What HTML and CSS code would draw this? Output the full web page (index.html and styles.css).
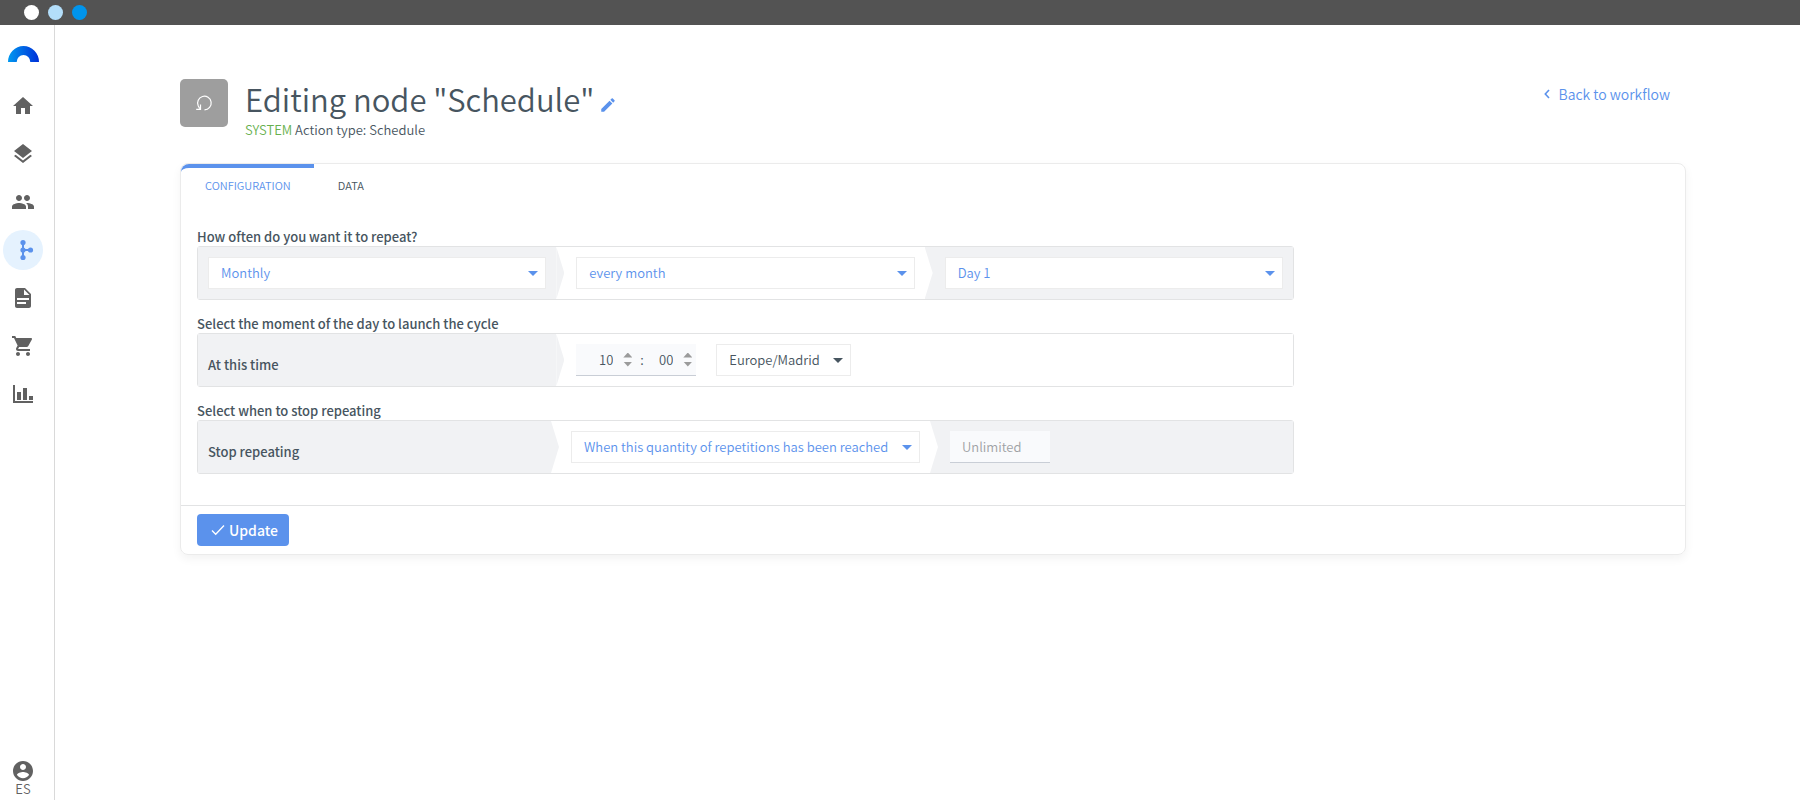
FILE: index.html
```html
<!DOCTYPE html>
<html lang="en">
<head>
<meta charset="utf-8">
<title>Editing node "Schedule"</title>
<link rel="stylesheet" href="styles.css">
</head>
<body>
<div class="topbar">
  <span class="dot dot-white"></span>
  <span class="dot dot-light"></span>
  <span class="dot dot-blue"></span>
</div>
<div class="shell">
  <nav class="sidebar" aria-label="Main">
    <a class="logo" href="#" aria-label="Start">
      <svg width="31" height="16" viewBox="0 0 32 16" preserveAspectRatio="none">
        <defs><linearGradient id="arc" x1="0" x2="1" y1="0" y2="0"><stop offset="0" stop-color="#0099f0"/><stop offset="1" stop-color="#002fd8"/></linearGradient></defs>
        <path d="M0 16a16 16 0 0 1 32 0h-9a7 7 0 0 0-14 0z" fill="url(#arc)"/>
      </svg>
    </a>
    <a class="nav-item" href="#" aria-label="Home"><svg class="icon" viewBox="0 0 24 24"><path d="M10 20v-6h4v6h5v-8h3L12 3 2 12h3v8z"/></svg></a>
    <a class="nav-item" href="#" aria-label="Layers"><svg class="icon" viewBox="0 0 24 24"><path d="M11.99 18.54l-7.37-5.73L3 14.07l9 7 9-7-1.63-1.27-7.38 5.74zM12 16l7.36-5.73L21 9l-9-7-9 7 1.63 1.27L12 16z"/></svg></a>
    <a class="nav-item" href="#" aria-label="People"><svg class="icon" viewBox="0 0 24 24"><path d="M16 11c1.66 0 2.99-1.34 2.99-3S17.66 5 16 5c-1.66 0-3 1.34-3 3s1.34 3 3 3zm-8 0c1.66 0 2.99-1.34 2.99-3S9.66 5 8 5C6.34 5 5 6.34 5 8s1.34 3 3 3zm0 2c-2.33 0-7 1.17-7 3.5V19h14v-2.500c0-2.330-4.670-3.500-7-3.500zm8 0c-.29 0-.62.02-.97.05 1.160.84 1.970 1.970 1.970 3.450V19h6v-2.500c0-2.330-4.670-3.500-7-3.500z"/></svg></a>
    <a class="nav-item active" href="#" aria-label="Workflows" aria-current="page"><svg class="icon" viewBox="0 0 24 24"><path d="M12 4.500v15M12 12h7.500" stroke="currentColor" stroke-width="2"/><circle cx="12" cy="4.500" r="2.600"/><circle cx="12" cy="12" r="2.600"/><circle cx="12" cy="19.500" r="2.600"/><circle cx="19.500" cy="12" r="2.600"/></svg></a>
    <a class="nav-item" href="#" aria-label="Documents"><svg class="icon" viewBox="0 0 24 24"><path d="M14 2H6c-1.100 0-1.990.9-1.990 2L4 20c0 1.100.89 2 1.990 2H18c1.100 0 2-.9 2-2V8l-6-6zm1 16H6v-2h9v2zm3-4H6v-2h12v2zm-5-5V3.500L18.500 9H13z"/></svg></a>
    <a class="nav-item" href="#" aria-label="Shop"><svg class="icon" viewBox="0 0 24 24"><path d="M7 18c-1.100 0-1.990.9-1.990 2S5.900 22 7 22s2-.9 2-2-.9-2-2-2zM1 2v2h2l3.600 7.590-1.350 2.450c-.16.28-.25.61-.25.96 0 1.100.9 2 2 2h12v-2H7.420c-.14 0-.25-.11-.25-.25l.03-.12.9-1.630h7.450c.75 0 1.410-.41 1.750-1.030l3.580-6.490c.08-.14.12-.31.12-.48 0-.55-.45-1-1-1H5.210l-.94-2H1zm16 16c-1.100 0-1.990.9-1.990 2s.89 2 1.990 2 2-.9 2-2-.9-2-2-2z"/></svg></a>
    <a class="nav-item" href="#" aria-label="Reports"><svg class="icon" viewBox="0 0 24 24"><path d="M2 3h2v16h18v2H2zM6 10h4v8H6zM12 6h4v12h-4zM18 14h4v4h-4z"/></svg></a>
    <a class="account" href="#">
      <svg class="icon" viewBox="0 0 24 24"><path d="M12 2C6.480 2 2 6.480 2 12s4.480 10 10 10 10-4.480 10-10S17.520 2 12 2zm0 3c1.660 0 3 1.340 3 3s-1.340 3-3 3-3-1.340-3-3 1.340-3 3-3zm0 14.200c-2.500 0-4.710-1.280-6-3.220.03-1.990 4-3.080 6-3.080 1.990 0 5.970 1.090 6 3.080-1.290 1.940-3.500 3.220-6 3.220z"/></svg>
      <span class="locale">ES</span>
    </a>
  </nav>

  <main class="content">
    <header class="page-head">
      <span class="node-badge">
        <svg class="line-icon" width="18" height="18" viewBox="0 0 18 18" stroke-width="1.200"><path d="M9.500 15.800A6.800 6.800 0 1 0 3.200 11.800L4.600 14.500M1.200 15.300H5.500V10.500"/></svg>
      </span>
      <div class="titles">
        <h1 class="title">Editing node "Schedule"
          <button class="edit" type="button" aria-label="Rename"><svg width="18" height="18" viewBox="0 0 24 24"><path d="M3 17.250V21h3.750L17.810 9.940l-3.750-3.750L3 17.250zM20.710 7.040c.39-.39.39-1.020 0-1.410l-2.340-2.340c-.39-.39-1.020-.39-1.410 0l-1.830 1.830 3.750 3.750 1.830-1.830z"/></svg></button>
        </h1>
        <p class="subtitle"><span class="system">SYSTEM</span> Action type: Schedule</p>
      </div>
      <a class="back" href="#"><svg class="line-icon" width="6" height="10" viewBox="0 0 6 10" stroke-width="1.600"><path d="M5 1L1.300 5 5 9"/></svg>Back to workflow</a>
    </header>

    <form class="card">
      <div class="tabs" role="tablist">
        <button class="tab selected" type="button" role="tab" aria-selected="true">CONFIGURATION</button>
        <button class="tab" type="button" role="tab" aria-selected="false">DATA</button>
      </div>

      <div class="fields">
        <section class="field">
          <h2 class="field-title">How often do you want it to repeat?</h2>
          <div class="steps">
            <div class="step gray"><span class="picker"><select aria-label="Frequency"><option>Monthly</option></select></span></div>
            <div class="step"><span class="picker"><select aria-label="Interval"><option>every month</option></select></span></div>
            <div class="step gray"><span class="picker"><select aria-label="Day"><option>Day 1</option></select></span></div>
          </div>
        </section>

        <section class="field">
          <h2 class="field-title">Select the moment of the day to launch the cycle</h2>
          <div class="steps">
            <div class="step gray"><span class="step-label">At this time</span></div>
            <div class="step double">
              <div class="time">
                <input class="time-input" type="text" value="10" aria-label="Hour">
                <span class="spin"><button class="up" type="button" aria-label="Hour up"></button><button class="down" type="button" aria-label="Hour down"></button></span>
                <span class="colon">:</span>
                <input class="time-input" type="text" value="00" aria-label="Minute">
                <span class="spin"><button class="up" type="button" aria-label="Minute up"></button><button class="down" type="button" aria-label="Minute down"></button></span>
              </div>
              <span class="picker dark"><select aria-label="Time zone"><option>Europe/Madrid</option></select></span>
            </div>
          </div>
        </section>

        <section class="field">
          <h2 class="field-title">Select when to stop repeating</h2>
          <div class="steps">
            <div class="step gray"><label class="step-label" for="stop">Stop repeating</label></div>
            <div class="step fit"><span class="picker"><select id="stop"><option>When this quantity of repetitions has been reached</option></select></span></div>
            <div class="step gray"><input class="limit" type="text" placeholder="Unlimited" aria-label="Repetitions"></div>
          </div>
        </section>
      </div>

      <footer class="card-foot">
        <button class="update" type="submit"><svg class="line-icon" width="14" height="12" viewBox="0 0 14 12" stroke-width="1.300"><path d="M1 6.500L4.700 10.300 13 1.500"/></svg>Update</button>
      </footer>
    </form>
  </main>
</div>
</body>
</html>
```

FILE: styles.css
```css
* { box-sizing: border-box; }

body {
  margin: 0;
  background: #fff;
  color: #475560;
  font: 350 13px/20px "Noto Sans CJK JP", "Noto Sans", sans-serif;
}

button, input, select { font: inherit; color: inherit; }
button { padding: 0; border: 0; background: none; cursor: pointer; }
a { color: inherit; text-decoration: none; }
svg { display: block; fill: currentColor; }
.line-icon { fill: none; stroke: currentColor; }
h1, h2, p { margin: 0; font-weight: inherit; }

.topbar {
  display: flex;
  align-items: center;
  gap: 9px;
  height: 25px;
  padding-left: 24px;
  background: #535353;
}
.dot { width: 15px; height: 15px; border-radius: 50%; }
.dot-white { background: #fff; }
.dot-light { background: #b3defa; }
.dot-blue { background: #0094ec; }

.shell { display: flex; min-height: calc(100vh - 25px); }

.sidebar {
  display: flex;
  flex: none;
  flex-direction: column;
  align-items: center;
  width: 55px;
  padding: 21px 8px 5px 0;
  border-right: 1px solid #d9d9d9;
  color: #616161;
}
.logo { margin-bottom: 24px; }
.nav-item {
  display: flex;
  align-items: center;
  justify-content: center;
  width: 40px;
  height: 40px;
  margin-bottom: 8px;
  border-radius: 50%;
}
.nav-item.active { background: #e5f2fe; color: #5b92ec; }
.icon { width: 24px; height: 24px; }
.account { display: flex; flex-direction: column; align-items: center; margin-top: auto; }
.locale { line-height: 12px; }

.content { flex: 1; min-width: 0; padding: 54px 114px 40px 125px; }

.page-head { display: flex; align-items: flex-start; margin-bottom: 23px; }
.node-badge {
  display: flex;
  align-items: center;
  justify-content: center;
  width: 48px;
  height: 48px;
  border-radius: 5px;
  background: #9e9e9e;
  color: #fff;
}
.titles { margin-left: 17px; }
.title {
  display: flex;
  align-items: flex-end;
  gap: 5px;
  margin-bottom: 1px;
  font-size: 31px;
  line-height: 40px;
}
.edit { padding-bottom: 5px; color: #5b92ec; }
.system { color: #67b04e; }
.back {
  display: flex;
  align-items: center;
  gap: 9px;
  margin: 5px 16px 0 auto;
  color: #5b92ec;
  font-size: 14px;
}

.card {
  border: 1px solid #ebebeb;
  border-radius: 8px;
  box-shadow: 0 4px 10px rgba(0, 0, 0, 0.05);
}
.tabs { display: flex; }
.tab {
  padding: 9px 23px 9px 24px;
  border-top: 4px solid transparent;
  font-size: 11px;
  line-height: 16px;
}
.tab.selected {
  border-top-color: #5b92ec;
  border-radius: 8px 0 4px 0;
  color: #5b92ec;
}

.fields {
  display: flex;
  flex-direction: column;
  gap: 16px;
  width: 75%;
  padding: 27px 15px 31px 16px;
}
.field-title { margin-bottom: 1px; font-size: 13px; font-weight: 500; line-height: 16px; }
.steps {
  display: flex;
  border: 1px solid #e2e3e4;
  border-radius: 3px;
}
.step {
  position: relative;
  display: flex;
  flex: 1 1 0;
  gap: 20px;
  min-width: 0;
  padding: 10px;
  background: #fff;
}
.step.gray { background: #f1f2f4; }
.step + .step { padding-left: 20px; }
.step.double { flex: 2 1 60px; }
.step.fit { flex: none; }
.step:not(:last-child)::after {
  content: "";
  position: absolute;
  z-index: 1;
  top: 0;
  bottom: 0;
  left: 100%;
  width: 8px;
  background: inherit;
  clip-path: polygon(0 0, 100% 50%, 0 100%);
}
.step-label {
  height: 32px;
  padding-top: 11px;
  font-weight: 500;
}

.picker { position: relative; flex: 1; color: #5b92ec; }
.picker select {
  display: block;
  width: 100%;
  height: 32px;
  padding: 0 30px 0 12px;
  border: 1px solid #ececec;
  border-radius: 0;
  appearance: none;
  background: #fff;
}
.picker::after {
  content: "";
  position: absolute;
  top: 14px;
  right: 8px;
  border: 5px solid transparent;
  border-top-color: currentColor;
  border-bottom: 0;
  pointer-events: none;
}
.picker.dark { flex: none; color: #475560; }

.time {
  display: flex;
  align-items: center;
  height: 32px;
  padding-right: 4px;
  border-bottom: 1px solid #c9ced6;
  background: #f9fafc;
}
.time-input {
  width: 37px;
  height: 30px;
  padding: 0;
  border: 0;
  background: transparent;
  text-align: right;
}
.spin { display: grid; gap: 4px; margin-left: 10px; }
.spin button { width: 9px; height: 5px; background: #9b9b9b; }
.up { clip-path: polygon(50% 0, 100% 100%, 0 100%); }
.down { clip-path: polygon(0 0, 100% 0, 50% 100%); }
.colon { width: 6px; margin-left: 8px; }
.colon + .time-input { width: 27px; }

.limit {
  width: 100px;
  height: 32px;
  padding: 0 12px;
  border: 0;
  border-bottom: 1px solid #c9ced6;
  border-radius: 0;
  background: #f9fafc;
}
.limit::placeholder { color: #9fa2a5; opacity: 1; }

.card-foot { padding: 8px 16px; border-top: 1px solid #e2e3e4; }
.update {
  display: flex;
  align-items: center;
  gap: 4px;
  height: 32px;
  padding: 0 11px 1px 14px;
  border-radius: 4px;
  background: #5b92ec;
  color: #fff;
  font-size: 14px;
  font-weight: 500;
}
```
